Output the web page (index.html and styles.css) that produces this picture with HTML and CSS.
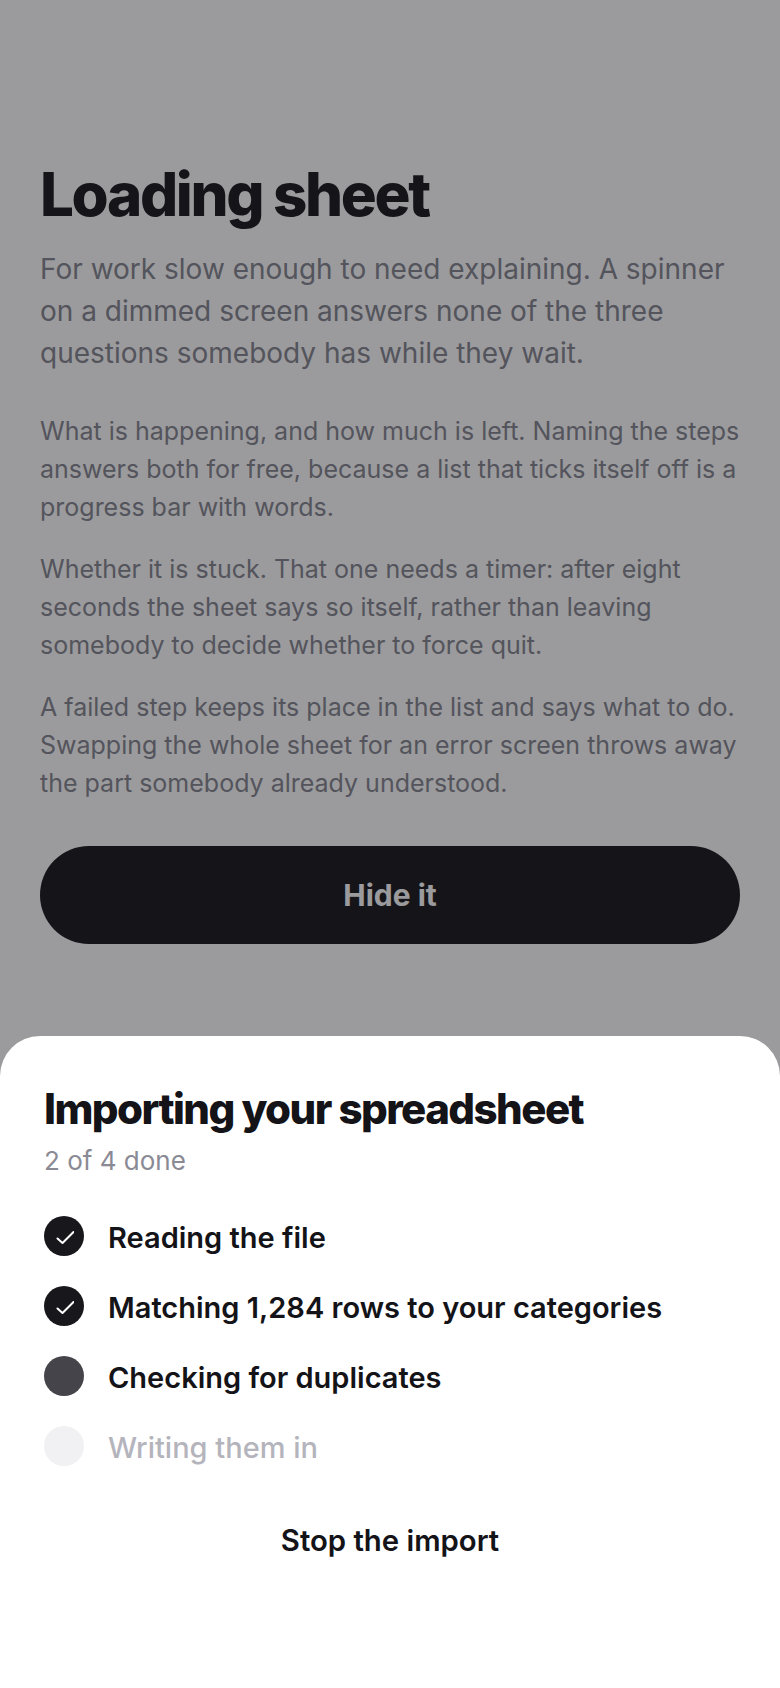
FILE: index.html
```html
<!DOCTYPE html>
<html>

<head>
    <title>Loading sheet</title>
    <link rel="stylesheet" href="styles.css">
</head>

<body>
    <div id="screen">
        <div id="page">
            <h1>Loading sheet</h1>
            <p class="lead">For work slow enough to need explaining. A spinner on a dimmed screen answers none of the three questions somebody has while they wait.</p>
            <p class="copy first">What is happening, and how much is left. Naming the steps answers both for free, because a list that ticks itself off is a progress bar with words.</p>
            <p class="copy">Whether it is stuck. That one needs a timer: after eight seconds the sheet says so itself, rather than leaving somebody to decide whether to force quit.</p>
            <p class="copy">A failed step keeps its place in the list and says what to do. Swapping the whole sheet for an error screen throws away the part somebody already understood.</p>
            <button class="hide">Hide it</button>
        </div>
        <div id="dim"></div>
        <div id="sheet">
            <h2>Importing your spreadsheet</h2>
            <p class="count">2 of 4 done</p>
            <ul class="steps">
                <li class="step">
                    <span class="dot done">
                        <svg width="20" height="20" viewBox="0 0 20 20"><path d="M3.500 12.500l5 4.500 11-11" fill="none" stroke="#fff" stroke-width="2" stroke-linecap="round" stroke-linejoin="round"/></svg>
                    </span>
                    Reading the file
                </li>
                <li class="step">
                    <span class="dot done">
                        <svg width="20" height="20" viewBox="0 0 20 20"><path d="M3.500 12.500l5 4.500 11-11" fill="none" stroke="#fff" stroke-width="2" stroke-linecap="round" stroke-linejoin="round"/></svg>
                    </span>
                    Matching 1,284 rows to your categories
                </li>
                <li class="step"><span class="dot active"></span>Checking for duplicates</li>
                <li class="step waiting"><span class="dot todo"></span>Writing them in</li>
            </ul>
            <button class="stop">Stop the import</button>
        </div>
    </div>
</body>

</html>
```

FILE: styles.css
```css
* {
    box-sizing: border-box;
    font-family: Inter, "Liberation Sans", sans-serif;
}

html,
body {
    margin: 0;
    padding: 0;
    background: #fff;
}

#screen {
    position: relative;
    width: 780px;
    height: 1688px;
    overflow: hidden;
    display: flex;
    flex-direction: column;
    justify-content: space-between;
}

#page {
    padding: 160px 40px 0;
}

#dim {
    position: absolute;
    top: 0;
    left: 0;
    right: 0;
    bottom: 0;
    background: rgba(17, 17, 22, 0.42);
}

h1 {
    margin: 0 0 20px;
    font-size: 60px;
    line-height: 68px;
    font-weight: 800;
    letter-spacing: -2.35px;
    color: #17171c;
}

.lead {
    margin: 0 0 38px;
    font-size: 28px;
    line-height: 42px;
    color: #85858f;
}

.copy {
    margin: 0 0 24px;
    font-size: 25px;
    line-height: 38px;
    color: #85858f;
}

.hide {
    display: block;
    width: 100%;
    height: 98px;
    margin-top: 44px;
    border: 0;
    border-radius: 49px;
    background: #17171c;
    color: #fff;
    font-size: 30px;
    font-weight: 700;
}

#sheet {
    position: relative;
    height: 652px;
    padding: 47px 44px 0;
    background: #fff;
    border-radius: 40px 40px 0 0;
}

h2 {
    margin: 0 0 6px;
    font-size: 42px;
    line-height: 52px;
    font-weight: 800;
    letter-spacing: -1.55px;
    color: #131318;
}

.count {
    margin: 0 0 21px;
    font-size: 26px;
    line-height: 40px;
    color: #8a8a94;
}

.steps {
    margin: 0;
    padding: 0;
    list-style: none;
}

.step {
    display: flex;
    align-items: center;
    gap: 24px;
    height: 70px;
    font-size: 29px;
    font-weight: 600;
    color: #131318;
}

.waiting {
    font-weight: 500;
    color: #b4b4bc;
}

.dot {
    flex: none;
    display: flex;
    align-items: center;
    justify-content: center;
    width: 40px;
    height: 40px;
    margin-top: -2px;
    border-radius: 50%;
}

.done {
    background: #17171c;
}

.active {
    background: #44444a;
}

.todo {
    background: #f1f1f4;
}

.stop {
    display: block;
    width: 100%;
    margin-top: 39px;
    padding: 0;
    border: 0;
    background: none;
    color: #131318;
    font-size: 29.300px;
    line-height: 40px;
    font-weight: 600;
}
```
